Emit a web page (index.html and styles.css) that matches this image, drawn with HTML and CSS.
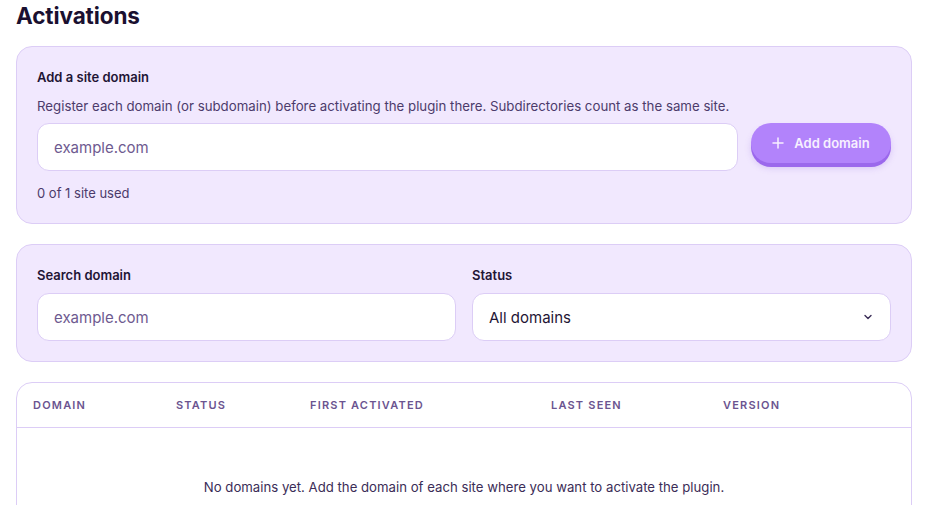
FILE: index.html
```html
<!DOCTYPE html>
<html>
<head>
<meta charset="utf-8">
<link rel="stylesheet" href="styles.css">
</head>
<body>
<main class="page">
  <h1 class="title">Activations</h1>

  <section class="card add-card">
    <div class="label">Add a site domain</div>
    <p class="desc">Register each domain (or subdomain) before activating the plugin there. Subdirectories count as the same site.</p>
    <div class="add-row">
      <div class="input grow"><span class="placeholder">example.com</span></div>
      <button class="btn">
        <svg class="plus" width="12" height="12" viewBox="0 0 12 12"><path d="M6 1v10M1 6h10" stroke="currentColor" stroke-width="1.5" stroke-linecap="round"/></svg>
        <span>Add domain</span>
      </button>
    </div>
    <div class="usage">0 of 1 site used</div>
  </section>

  <section class="card filter-card">
    <div class="field">
      <div class="label">Search domain</div>
      <div class="input"><span class="placeholder">example.com</span></div>
    </div>
    <div class="field">
      <div class="label">Status</div>
      <div class="input select">
        <span class="value">All domains</span>
        <svg class="chev" width="12" height="12" viewBox="0 0 12 12"><path d="M3 4.5l3 3 3-3" fill="none" stroke="currentColor" stroke-width="1.4" stroke-linecap="round" stroke-linejoin="round"/></svg>
      </div>
    </div>
  </section>

  <section class="table-card">
    <div class="thead">
      <div>Domain</div>
      <div>Status</div>
      <div>First activated</div>
      <div>Last seen</div>
      <div>Version</div>
    </div>
    <div class="empty">No domains yet. Add the domain of each site where you want to activate the plugin.</div>
  </section>
</main>
</body>
</html>
```

FILE: styles.css
```css
* { box-sizing: border-box; }
html, body { margin: 0; padding: 0; background: #ffffff; }
body {
  font-family: Inter, "Noto Sans", sans-serif;
  color: #1f1535;
  overflow: hidden;
}
.page {
  width: 896px;
  margin-left: 16px;
  padding-top: 0;
}
.title {
  margin: 0;
  font-size: 22.5px;
  font-weight: 700;
  line-height: 32px;
  letter-spacing: -0.1px;
  color: #1a1030;
  height: 46px;
}
.card {
  background: #f1e8fe;
  border: 1px solid #dccdf6;
  border-radius: 16px;
}
.add-card {
  padding: 21px 20px 21px 20px;
  height: 178px;
}
.label {
  font-size: 13px;
  font-weight: 600;
  line-height: 18px;
  color: #1f1535;
}
.desc {
  margin: 11px 0 0;
  font-size: 13.25px;
  line-height: 18px;
  color: #4c3b6b;
}
.add-row {
  display: flex;
  gap: 13px;
  margin-top: 8px;
  align-items: flex-start;
}
.input {
  height: 48px;
  background: #ffffff;
  border: 1px solid #dccdf6;
  border-radius: 12px;
  display: flex;
  align-items: center;
  padding: 0 16px;
  font-size: 15px;
}
.grow { flex: 1; }
.placeholder { color: #6e5a90; }
.value { color: #1f1535; flex: 1; }
.btn {
  width: 140px;
  height: 40px;
  border: 0;
  border-radius: 20px;
  background: #b283fb;
  box-shadow: 0 4px 0 #9b68ec, 0 5px 6px rgba(140, 90, 220, 0.25);
  color: #f7f0ff;
  font-family: inherit;
  font-size: 13px;
  font-weight: 600;
  display: flex;
  align-items: center;
  justify-content: center;
  gap: 10px;
  padding: 0;
}
.usage {
  margin-top: 13px;
  font-size: 13px;
  line-height: 18px;
  color: #4c3b6b;
}
.filter-card {
  margin-top: 20px;
  height: 118px;
  padding: 21px 20px;
  display: grid;
  grid-template-columns: 1fr 1fr;
  gap: 16px;
}
.field .label { margin-bottom: 9px; }
.chev { color: #3b2d57; }
.table-card {
  margin-top: 20px;
  border: 1px solid #dccdf6;
  border-radius: 16px;
  height: 140px;
  background: #ffffff;
}
.thead {
  display: grid;
  grid-template-columns: 143px 134px 241px 172px 1fr;
  padding: 0 16px;
  height: 45px;
  align-items: center;
  border-bottom: 1px solid #dccdf6;
  font-size: 11px;
  font-weight: 600;
  text-transform: uppercase;
  letter-spacing: 1.2px;
  color: #6b5490;
}
.empty {
  padding-top: 50px;
  text-align: center;
  font-size: 13.2px;
  line-height: 18px;
  color: #3b2d57;
}
```
